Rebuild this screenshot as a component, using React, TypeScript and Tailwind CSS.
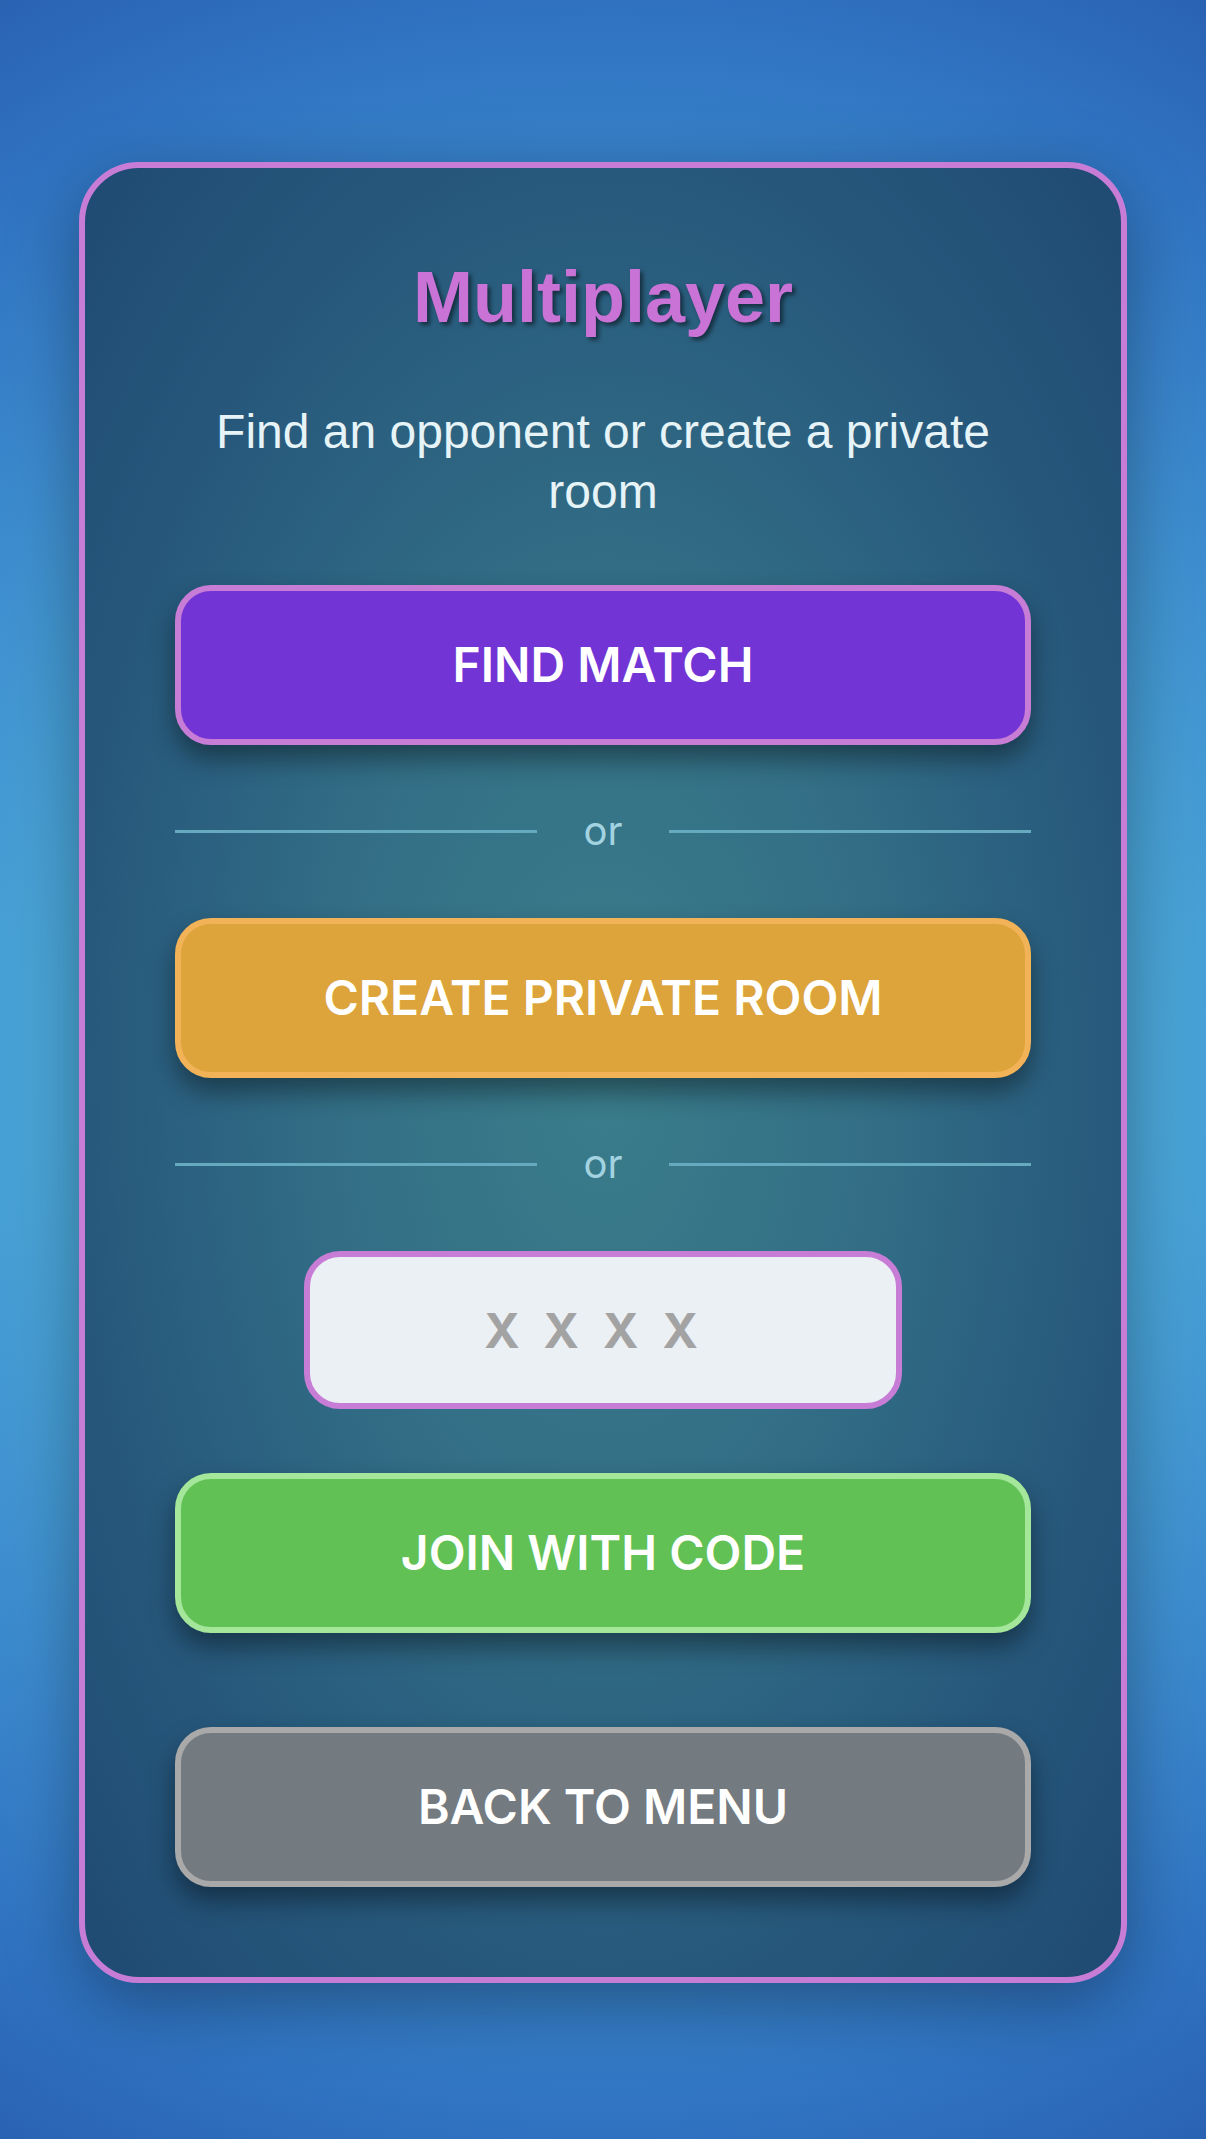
import { useState } from "react";

const buttonBase =
  "flex h-[160px] w-full items-center justify-center rounded-[36px] border-[6px] font-['Inter',sans-serif] text-[48px] font-semibold text-white shadow-[0_14px_26px_rgba(0,0,0,0.4)]";

const Divider = () => (
  <div className="mt-[62px] flex h-[48px] w-full items-center">
    <div className="h-[3px] flex-1 bg-[#66aabf]" />
    <span className="px-[46px] font-['Inter',sans-serif] text-[40px] leading-none text-[#a3d3e0]">or</span>
    <div className="h-[3px] flex-1 bg-[#66aabf]" />
  </div>
);

const App = () => {
  const [code, setCode] = useState("");

  return (
    <div className="flex min-h-screen w-full justify-center bg-[radial-gradient(circle_at_center,#52b8e0_0%,#4aa6d8_45%,#3a86cc_70%,#3074c2_85%,#2a62b2_100%)] pt-[162px]">
      {/* Card */}
      <div className="flex h-fit w-[1048px] flex-col items-center rounded-[60px] border-[6px] border-[#c77dd6] bg-[radial-gradient(ellipse_at_center,#3a7d8b_0%,#336f86_35%,#27597c_70%,#1f4a73_100%)] px-[90px] pb-[90px] pt-[87px] shadow-[0_20px_70px_rgba(0,0,0,0.35)]">
        <h1 className="font-['Liberation_Sans',Arial,sans-serif] text-[72px] font-bold leading-[84px] text-[#c973d6] [text-shadow:3px_3px_4px_rgba(0,0,0,0.5)]">
          Multiplayer
        </h1>
        <p className="mt-[63px] text-center font-['Liberation_Sans',Arial,sans-serif] text-[48px] leading-[60px] text-[#e6f3f7]">
          Find an opponent or create a private room
        </p>

        <button className={`${buttonBase} mt-[63px] border-[#c77dd6] bg-[#7234d4]`}>FIND MATCH</button>

        <Divider />

        <button className={`${buttonBase} mt-[63px] border-[#f2b257] bg-[#dca43a]`}>CREATE PRIVATE ROOM</button>

        <Divider />

        <input
          value={code}
          onChange={(e) => setCode(e.target.value.toUpperCase())}
          placeholder="XXXX"
          maxLength={4}
          className="mt-[63px] h-[158px] w-[598px] rounded-[36px] border-[6px] border-[#c77dd6] bg-[#ebf0f5] text-center font-['Inter',sans-serif] text-[48px] font-bold tracking-[24px] text-[#333] outline-none placeholder:text-[#a3a3a3]"
        />

        <button className={`${buttonBase} mt-[64px] border-[#a4e69a] bg-[#62c155]`}>JOIN WITH CODE</button>

        <button className={`${buttonBase} mt-[94px] border-[#a9a9a9] bg-[#737a80]`}>BACK TO MENU</button>
      </div>
    </div>
  );
};

export default App;
